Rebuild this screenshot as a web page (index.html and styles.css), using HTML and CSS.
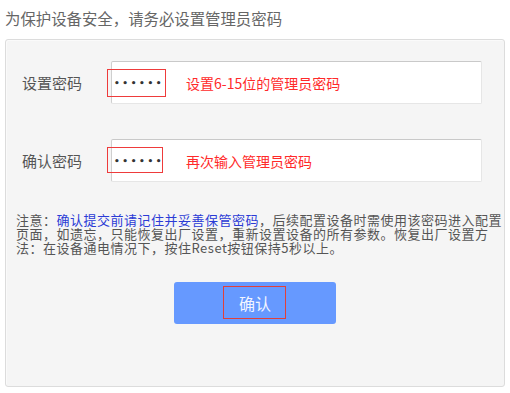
FILE: index.html
```html
<!DOCTYPE html>
<html lang="zh">
<head>
<meta charset="utf-8">
<link rel="stylesheet" href="styles.css">
</head>
<body>
<div class="title">为保护设备安全，请务必设置管理员密码</div>
<div class="panel">
  <div class="row row-first">
    <div class="label">设置密码</div>
    <div class="field">
      <span class="dots">••••••</span>
      <span class="hint">设置6-15位的管理员密码</span>
      <span class="mark mark-pw"></span>
    </div>
  </div>
  <div class="row row-second">
    <div class="label">确认密码</div>
    <div class="field">
      <span class="dots">••••••</span>
      <span class="hint">再次输入管理员密码</span>
      <span class="mark mark-pw2"></span>
    </div>
  </div>
  <p class="note">注意：<span class="link">确认提交前请记住并妥善保管密码</span>，后续配置设备时需使用该密码进入配置页面，如遗忘，只能恢复出厂设置，重新设置设备的所有参数。恢复出厂设置方法：在设备通电情况下，按住Reset按钮保持5秒以上。</p>
  <div class="actions">
    <div class="btn">确认<span class="mark mark-btn"></span></div>
  </div>
</div>
</body>
</html>
```
FILE: styles.css
```css
html, body {
  margin: 0;
  padding: 0;
  background: #ffffff;
}
body {
  font-family: "Noto Sans CJK SC", "Noto Sans", sans-serif;
  color: #555;
  width: 510px;
  height: 393px;
  overflow: hidden;
}
.title {
  height: 39px;
  line-height: 37px;
  padding-left: 5px;
  font-size: 15.4px;
  color: #666;
}
.panel {
  margin-left: 5px;
  width: 498px;
  height: 346px;
  border: 1px solid #dcdcdc;
  border-radius: 3px;
  background: #f5f5f5;
  box-shadow: inset 1px 1px 0 #fafafa;
}
.row {
  display: flex;
  align-items: center;
}
.row-first {
  margin-top: 21px;
}
.row-second {
  margin-top: 35px;
}
.label {
  width: 89px;
  padding-left: 16px;
  font-size: 15px;
  color: #555;
}
.field {
  position: relative;
  width: 369px;
  height: 41px;
  background: #fff;
  border: 1px solid #e6e6e6;
  border-top-color: #c9c9c9;
  border-left-color: #cfcfcf;
  border-radius: 2px;
  display: flex;
  align-items: center;
}
.dots {
  margin-left: 2px;
  width: 72px;
  font-size: 9px;
  font-weight: bold;
  letter-spacing: 2.6px;
  color: #333;
  font-family: "DejaVu Sans", sans-serif;
}
.hint {
  font-size: 14px;
  color: #ff2a2a;
}
.mark {
  position: absolute;
  border: 1.5px solid #ee3b3b;
}
.mark-pw {
  left: -5px;
  top: 7px;
  width: 57px;
  height: 26px;
}
.mark-pw2 {
  left: -5px;
  top: 7px;
  width: 54px;
  height: 24px;
}
.note {
  margin: 31px 0 0 10px;
  width: 490px;
  font-size: 13px;
  letter-spacing: 0.5px;
  line-height: 14px;
  color: #555;
}
.link {
  color: #2b3bd6;
}
.actions {
  display: flex;
  justify-content: center;
  margin-top: 27px;
}
.btn {
  position: relative;
  width: 162px;
  height: 42px;
  border-radius: 3px;
  background: #6699ff;
  color: #f2f5ff;
  font-size: 16px;
  display: flex;
  align-items: center;
  justify-content: center;
}
.mark-btn {
  left: 49px;
  top: 4px;
  width: 61px;
  height: 31px;
  border-color: #e0403a;
}
```
